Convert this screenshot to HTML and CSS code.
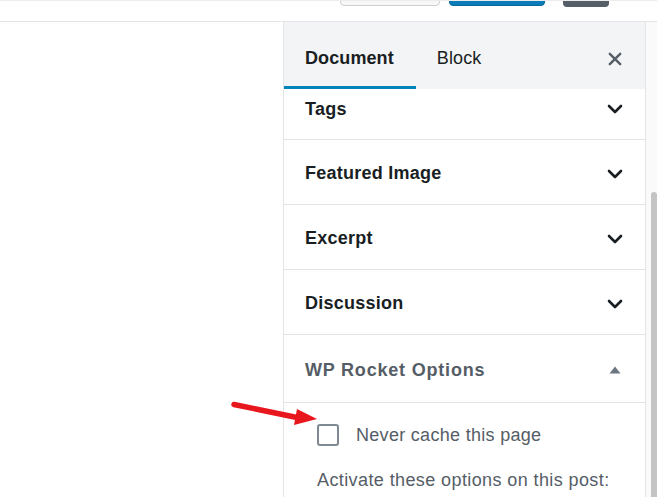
FILE: index.html
```html
<!DOCTYPE html>
<html lang="en">
<head>
<meta charset="utf-8">
<title>Editor</title>
<link rel="stylesheet" href="styles.css">
</head>
<body>
<div class="app">
  <header class="topbar">
    <span class="btn btn-secondary"></span>
    <span class="btn btn-primary"></span>
    <span class="btn btn-dark"></span>
  </header>
  <div class="layout">
    <main class="editor"></main>
    <aside class="sidebar">
      <div class="sidebar-header">
        <div class="tab is-active">Document</div>
        <div class="tab">Block</div>
        <button class="close" aria-label="Close">
          <svg width="14" height="14" viewBox="0 0 14 14"><path d="M1.8 1.8l10.4 10.4M12.2 1.8l-10.4 10.4" stroke="#555d66" stroke-width="2.4" stroke-linecap="round" fill="none"/></svg>
        </button>
      </div>
      <div class="sidebar-body">
        <div class="panel-list">
          <div class="panel-row"><span>Tags</span><svg class="chev" width="24" height="24" viewBox="0 0 24 24"><path d="M6 9l6 6 6-6" stroke="#191e23" stroke-width="2.6" fill="none" stroke-linecap="round" stroke-linejoin="round"/></svg></div>
          <div class="panel-row"><span>Featured Image</span><svg class="chev" width="24" height="24" viewBox="0 0 24 24"><path d="M6 9l6 6 6-6" stroke="#191e23" stroke-width="2.6" fill="none" stroke-linecap="round" stroke-linejoin="round"/></svg></div>
          <div class="panel-row"><span>Excerpt</span><svg class="chev" width="24" height="24" viewBox="0 0 24 24"><path d="M6 9l6 6 6-6" stroke="#191e23" stroke-width="2.6" fill="none" stroke-linecap="round" stroke-linejoin="round"/></svg></div>
          <div class="panel-row"><span>Discussion</span><svg class="chev" width="24" height="24" viewBox="0 0 24 24"><path d="M6 9l6 6 6-6" stroke="#191e23" stroke-width="2.6" fill="none" stroke-linecap="round" stroke-linejoin="round"/></svg></div>
          <div class="panel-row panel-row--open"><span>WP Rocket Options</span><svg class="chev" width="24" height="24" viewBox="0 0 24 24"><path d="M6.5 15.5l5.5-7 5.5 7z" fill="#6c7781"/></svg></div>
          <div class="panel-content">
            <label class="check-row"><span class="checkbox"></span><span>Never cache this page</span></label>
            <p class="note">Activate these options on this post:</p>
          </div>
        </div>
      </div>
    </aside>
    <div class="scrollbar"><div class="thumb"></div></div>
  </div>
  <svg class="annotation" width="90" height="34" viewBox="0 0 90 34">
    <path d="M3 5.5 L66 18.5" stroke="#e8161d" stroke-width="5.5" stroke-linecap="round"/>
    <path d="M66 10 L86 20 L63 26 Z" fill="#e8161d"/>
  </svg>
</div>
</body>
</html>
```

FILE: styles.css
```css
* { box-sizing: border-box; }
html, body { margin: 0; padding: 0; }
body {
  width: 657px;
  height: 497px;
  overflow: hidden;
  background: #fff;
  font-family: "Liberation Sans", Arial, Helvetica, sans-serif;
  color: #191e23;
}
.app {
  position: relative;
  display: flex;
  flex-direction: column;
  height: 497px;
}
.topbar {
  height: 22px;
  flex: none;
  border-top: 1px solid #ececec;
  border-bottom: 1px solid #e2e4e7;
  display: flex;
  justify-content: flex-end;
  align-items: flex-start;
  padding-right: 48px;
  overflow: hidden;
}
.btn {
  display: block;
  height: 30px;
  margin-top: -25px;
  border-radius: 4px;
}
.btn-secondary {
  width: 100px;
  border: 1px solid #ccd0d4;
  background: #f7f7f7;
  margin-right: 9px;
}
.btn-primary {
  width: 96px;
  background: #0b7cb9;
  border: 1px solid #07689d;
  margin-right: 18px;
}
.btn-dark {
  width: 46px;
  background: #555d66;
  margin-top: -24px;
}
.layout {
  flex: 1;
  display: flex;
  min-height: 0;
}
.editor {
  width: 283px;
  flex: none;
  background: #fff;
}
.sidebar {
  width: 363px;
  flex: none;
  border-left: 1px solid #e2e4e7;
  border-right: 1px solid #e2e4e7;
  display: flex;
  flex-direction: column;
  overflow: hidden;
  background: #fff;
}
.sidebar-header {
  height: 67px;
  flex: none;
  background: #f3f4f5;
  display: flex;
  align-items: stretch;
}
.tab {
  display: flex;
  align-items: center;
  padding: 8px 22px 0 21px;
  font-size: 18px;
  letter-spacing: 0.1px;
  color: #191e23;
  border-bottom: 3px solid transparent;
}
.tab.is-active {
  font-weight: 700;
  border-bottom-color: #0085ba;
}
.close {
  margin-left: auto;
  margin-right: 10px;
  width: 40px;
  border: 0;
  background: transparent;
  padding: 6px 0 0;
  display: flex;
  align-items: center;
  justify-content: center;
}
.sidebar-body {
  flex: 1;
  overflow: hidden;
}
.panel-list {
  margin-top: -13px;
}
.panel-row {
  height: 65px;
  border-bottom: 1px solid #e2e4e7;
  display: flex;
  align-items: center;
  justify-content: space-between;
  padding: 3px 18px 0 21px;
  font-size: 18px;
  font-weight: 700;
  letter-spacing: 0.25px;
}
.panel-row:first-child {
  height: 64px;
}
.panel-row--open {
  height: 68px;
  padding-top: 3px;
  color: #555d66;
  letter-spacing: 0.8px;
}
.chev { display: block; }
.panel-content {
  padding: 21px 16px 0 33px;
  color: #555d66;
  font-size: 18px;
}
.check-row {
  display: flex;
  align-items: center;
  height: 22px;
  letter-spacing: 0.3px;
}
.checkbox {
  width: 22px;
  height: 22px;
  border: 2px solid #7e8993;
  border-radius: 3px;
  margin-right: 17px;
  flex: none;
}
.note {
  margin: 23px 0 0;
  line-height: 22px;
  letter-spacing: 0.4px;
  white-space: nowrap;
}
.scrollbar {
  width: 11px;
  flex: none;
  background: #fafafa;
  display: flex;
  flex-direction: column;
}
.thumb {
  margin: 170px 0 0 5px;
  width: 6px;
  flex: 1;
  background: #c4c4c4;
  border-radius: 3px 3px 0 0;
}
.annotation {
  position: absolute;
  left: 231px;
  top: 399px;
}
```
